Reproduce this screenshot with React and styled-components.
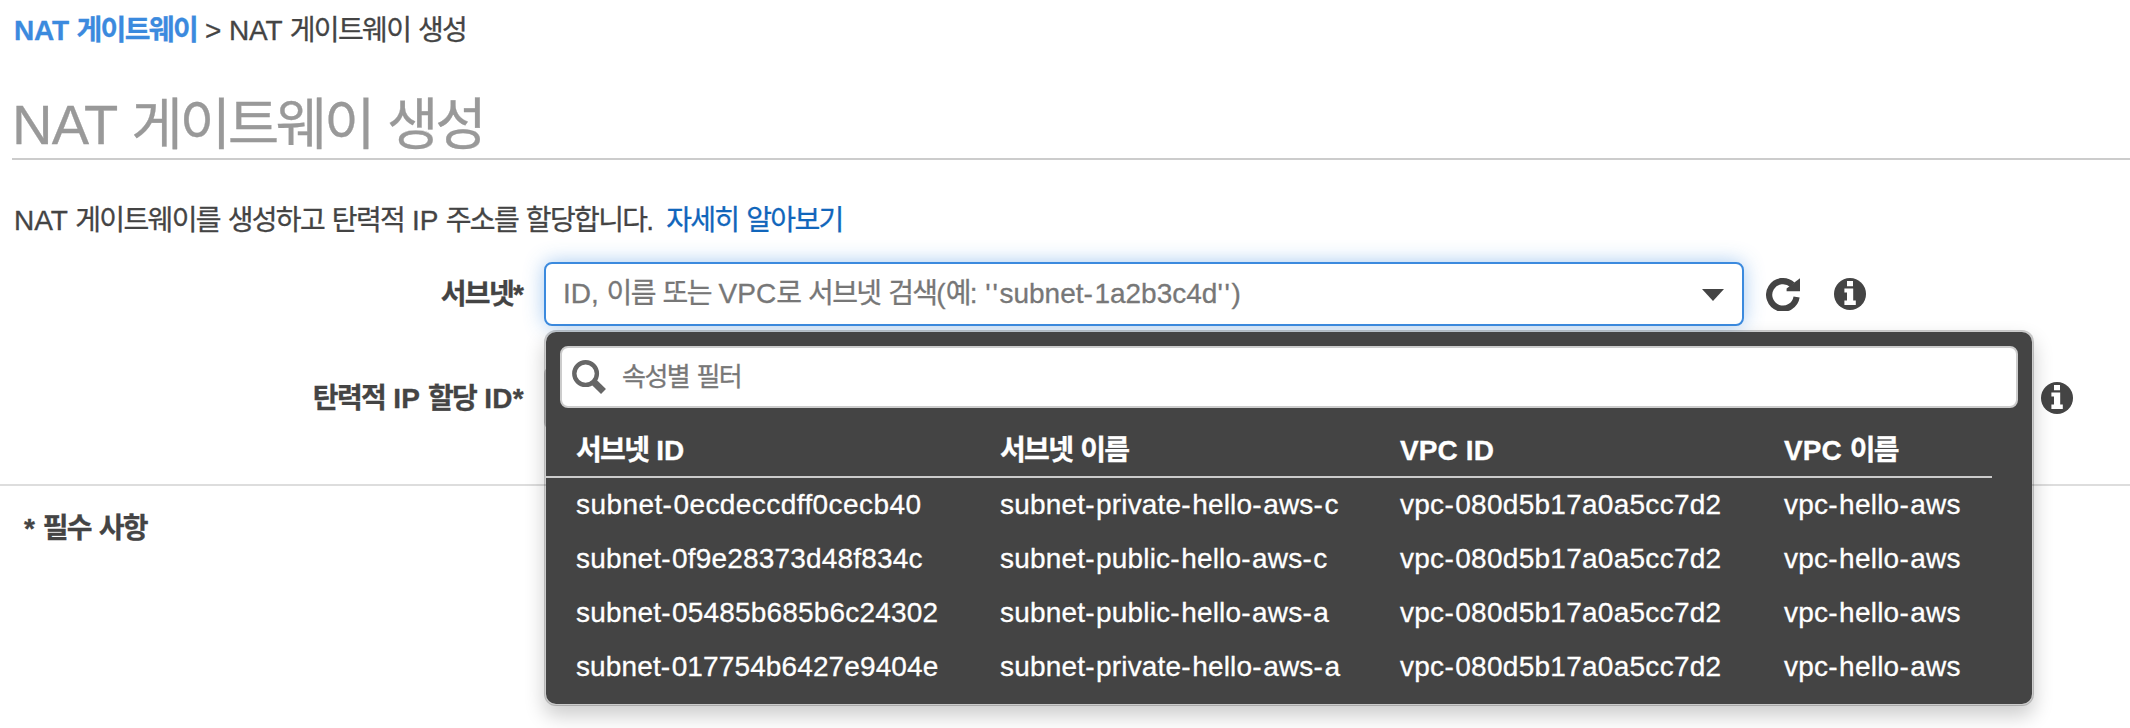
import React from 'react';
import styled, { createGlobalStyle } from 'styled-components';

const GlobalStyle = createGlobalStyle`
  * { box-sizing: border-box; }
  body {
    margin: 0;
    background: #fff;
    color: #444;
    font-family: "Liberation Sans", "Noto Sans CJK KR", sans-serif;
    font-size: 28px;
    line-height: 40px;
    overflow: hidden;
  }
`;

const Page = styled.main`
  width: 100%;
  height: 728px;
  padding-top: 11px;
  overflow: hidden;
`;

const Run = styled.span`
  letter-spacing: ${(p) => p.$spacing};
`;

const Line = styled.span`
  white-space: pre;
  letter-spacing: ${(p) => p.$tracking || 0}px;
  -webkit-text-stroke: 0.3px currentColor;
`;

const Breadcrumb = styled.nav`
  display: flex;
  gap: 8px;
  padding-left: 14px;
`;

const CrumbLink = styled.a`
  color: #3b8ade;
  font-weight: 700;
`;

const Title = styled.h1`
  margin: 40px 0 0 12px;
  border-bottom: 2px solid #ccc;
  color: #999;
  font-size: 56px;
  font-weight: 400;
  line-height: 67px;
`;

const Description = styled.p`
  display: flex;
  gap: 12px;
  margin: 41px 0 0;
  padding-left: 14px;
`;

const LearnMore = styled.a`
  color: #16b;
`;

const Form = styled.section`
  display: flex;
  flex-direction: column;
  gap: 40px;
  margin-top: 21px;
  padding-bottom: 54px;
  border-bottom: 2px solid #ddd;
`;

const FormRow = styled.div`
  display: flex;
  align-items: center;
  height: 64px;
`;

const Label = styled.label`
  width: 524px;
  margin-right: 20px;
  padding-top: 2px;
  text-align: right;
  font-weight: 700;
`;

const Field = styled.div`
  position: relative;
  flex: none;
  width: ${(p) => p.$width}px;
  margin-right: 22px;
`;

const SelectBox = styled.div`
  display: flex;
  align-items: center;
  justify-content: space-between;
  height: 64px;
  padding: 0 18px 0 17px;
  border: 2px solid ${(p) => (p.$focused ? '#3b8ade' : '#ccc')};
  border-radius: 8px;
  background: #fff;
  color: #777;
  line-height: 60px;
  box-shadow: ${(p) => (p.$focused ? '0 0 20px rgba(59, 138, 222, 0.45)' : 'none')};
`;

const Caret = styled.span`
  margin-top: 2px;
  border: 11px solid transparent;
  border-top: 12px solid #444;
  border-bottom: 0;
`;

const IconSlot = styled.span`
  display: flex;
  margin-right: 34px;
`;

const Dropdown = styled.div`
  position: absolute;
  z-index: 2;
  top: 68px;
  left: 0;
  width: 1490px;
  height: 376px;
  border: 2px solid rgba(0, 0, 0, 0.2);
  border-radius: 12px;
  background: #444;
  background-clip: padding-box;
  box-shadow: 0 10px 20px rgba(0, 0, 0, 0.2);
  color: #fff;
`;

const FilterBox = styled.div`
  display: flex;
  align-items: center;
  gap: 15px;
  height: 62px;
  margin: 14px 14px 0;
  padding-left: 10px;
  border: 2px solid #ccc;
  border-radius: 8px;
  background: #fff;
  color: #777;
  font-size: 26px;
`;

const Table = styled.div`
  width: 1446px;
  margin-top: 23px;
`;

const TableRow = styled.div`
  display: grid;
  grid-template-columns: 424px 400px 384px 1fr;
  padding-left: 30px;
  line-height: 54px;
`;

const TableHead = styled(TableRow)`
  padding-bottom: 5px;
  border-bottom: 2px solid #ccc;
  font-weight: 700;
  line-height: 40px;
`;

const Required = styled.p`
  margin: 23px 0 0 24px;
  font-weight: 700;
`;

const HANGUL = /[\uac00-\ud7a3]/;

const spacingFor = (run) => {
  if (HANGUL.test(run)) return '-0.059em';
  if (run[0] === '-') return '0.055em';
  if (run[0] === "'") return '0.06em';
  return null;
};

function Text({ children, tracking }) {
  const runs = children.split(/([\uac00-\ud7a3]+|-|'+)/).filter(Boolean);
  return (
    <Line $tracking={tracking}>
      {runs.map((run, i) => {
        const spacing = spacingFor(run);
        return spacing ? <Run key={i} $spacing={spacing}>{run}</Run> : run;
      })}
    </Line>
  );
}

const InfoIcon = () => (
  <svg width="32" height="32" viewBox="0 0 32 32">
    <circle cx="16" cy="16" r="16" fill="#444" />
    <path fill="#fff" d="M13 3h6v5.2h-6zM10.4 10.6H19.2V22.4H21.8V27H10.4V22.4H13V14.6H10.4z" />
  </svg>
);

const RefreshIcon = () => (
  <svg width="34" height="34" viewBox="0 0 34 34">
    <path d="M30.6 20A13.8 13.8 0 1 1 26.4 7.8" fill="none" stroke="#444" strokeWidth="6.2" />
    <path d="M34 1.2V14.2H20.6V11.4L30 4.2z" fill="#444" />
  </svg>
);

const SearchIcon = () => (
  <svg width="35" height="35" viewBox="0 0 35 35">
    <circle cx="13.6" cy="13.6" r="11.3" fill="none" stroke="#666" strokeWidth="4.4" />
    <path d="M21.8 22L31.5 31.5" stroke="#666" strokeWidth="7" />
  </svg>
);

const COLUMNS = ['서브넷 ID', '서브넷 이름', 'VPC ID', 'VPC 이름'];
const VPC = 'vpc-080d5b17a0a5cc7d2';
const SUBNETS = [
  { id: 'subnet-0ecdeccdff0cecb40', name: 'subnet-private-hello-aws-c', idTracking: 0.42 },
  { id: 'subnet-0f9e28373d48f834c', name: 'subnet-public-hello-aws-c', idTracking: 0.18 },
  { id: 'subnet-05485b685b6c24302', name: 'subnet-public-hello-aws-a', idTracking: 0.18 },
  { id: 'subnet-017754b6427e9404e', name: 'subnet-private-hello-aws-a', idTracking: 0.12 },
];

export default function App() {
  return (
    <Page>
      <GlobalStyle />
      <Breadcrumb>
        <CrumbLink><Text tracking={-0.2}>NAT 게이트웨이</Text></CrumbLink>
        <Text tracking={-0.1}>{'> NAT 게이트웨이 생성'}</Text>
      </Breadcrumb>
      <Title><Text tracking={-0.8}>NAT 게이트웨이 생성</Text></Title>
      <Description>
        <Text>NAT 게이트웨이를 생성하고 탄력적 IP 주소를 할당합니다.</Text>
        <LearnMore><Text>자세히 알아보기</Text></LearnMore>
      </Description>
      <Form>
        <FormRow>
          <Label><Text>서브넷*</Text></Label>
          <Field $width={1200}>
            <SelectBox $focused>
              <Text>{"ID, 이름 또는 VPC로 서브넷 검색(예: ''subnet-1a2b3c4d'')"}</Text>
              <Caret />
            </SelectBox>
            <Dropdown>
              <FilterBox>
                <SearchIcon />
                <Text>속성별 필터</Text>
              </FilterBox>
              <Table>
                <TableHead>
                  {COLUMNS.map((name) => <Text key={name} tracking={0.1}>{name}</Text>)}
                </TableHead>
                {SUBNETS.map((subnet) => (
                  <TableRow key={subnet.id}>
                    <Text tracking={subnet.idTracking}>{subnet.id}</Text>
                    <Text tracking={0.18}>{subnet.name}</Text>
                    <Text tracking={0.27}>{VPC}</Text>
                    <Text tracking={0.22}>vpc-hello-aws</Text>
                  </TableRow>
                ))}
              </Table>
            </Dropdown>
          </Field>
          <IconSlot><RefreshIcon /></IconSlot>
          <IconSlot><InfoIcon /></IconSlot>
        </FormRow>
        <FormRow>
          <Label><Text tracking={0.3}>탄력적 IP 할당 ID*</Text></Label>
          <Field $width={1475}><SelectBox /></Field>
          <IconSlot><InfoIcon /></IconSlot>
        </FormRow>
      </Form>
      <Required><Text>* 필수 사항</Text></Required>
    </Page>
  );
}
